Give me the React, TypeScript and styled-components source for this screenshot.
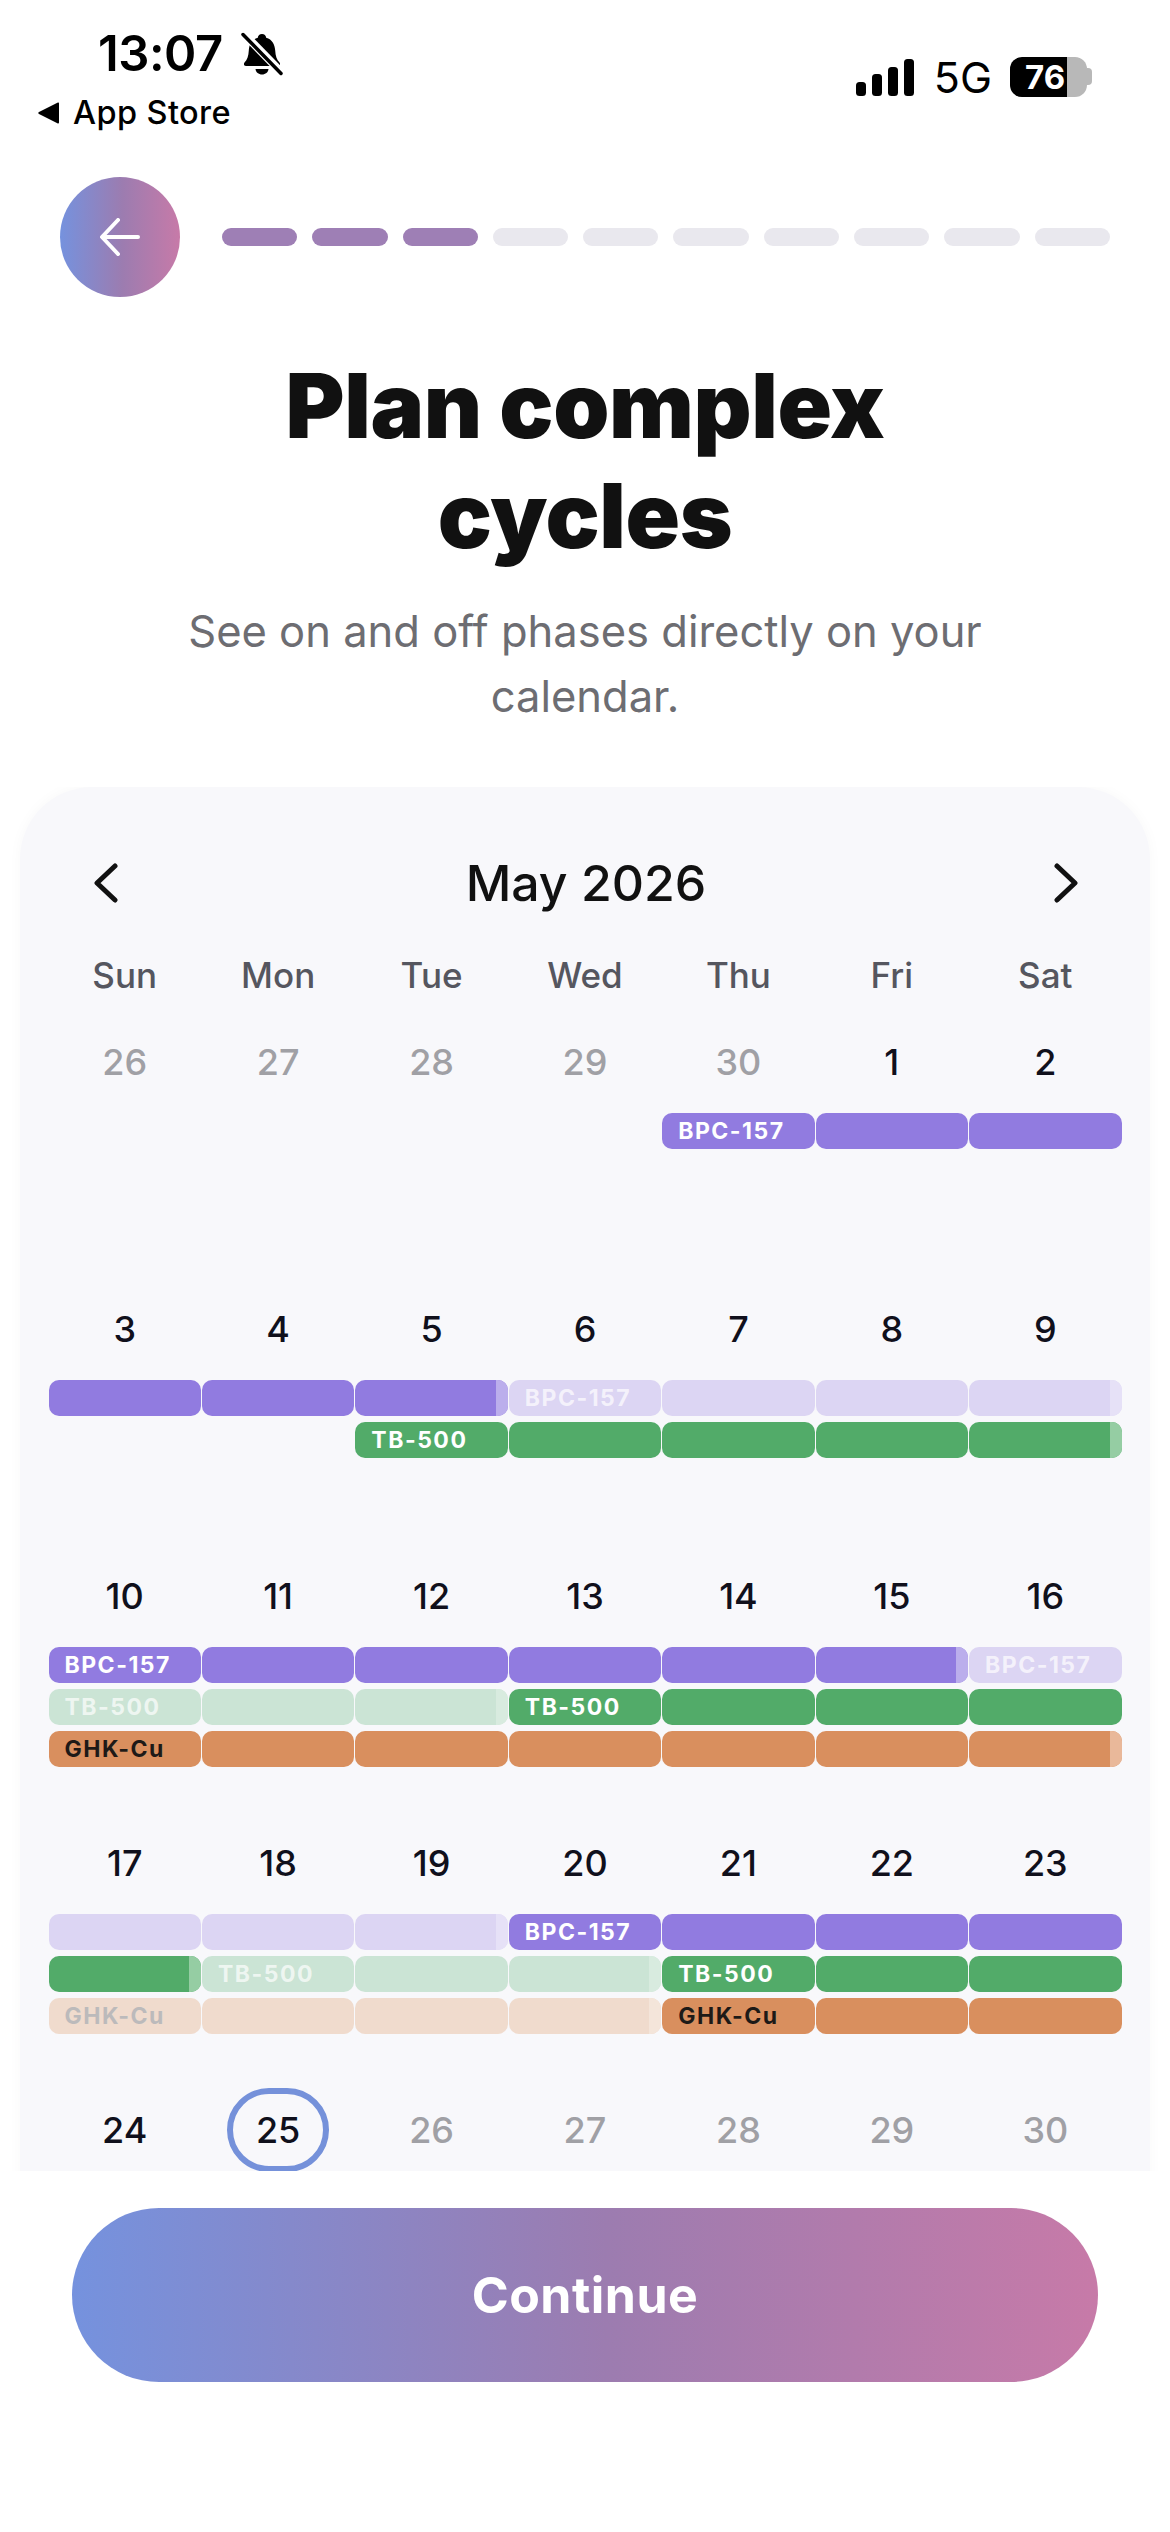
import styled, { createGlobalStyle } from "styled-components"

type Drug = "bpc" | "tb" | "ghk"

type Segment = {
  drug: Drug
  off?: boolean
  label?: string
  tail?: boolean
}

type Day = { n: number; muted?: boolean; today?: boolean }

type Week = {
  days: Day[]
  lanes: (Segment | null)[][]
}

const GlobalStyle = createGlobalStyle`
  html, body {
    margin: 0;
    padding: 0;
    background: #fff;
    font-family: Inter, "Liberation Sans", sans-serif;
  }
  * { box-sizing: border-box; }
`

const brandGradient = "linear-gradient(90deg, #7592de, #9c7cb0 52%, #c77aa8)"

const colors = {
  bpc: { on: "#917be0", off: "#dcd5f3", tailOn: "#bbaeec", tailOff: "#e6e1f7" },
  tb: { on: "#52ab69", off: "#cbe4d5", tailOn: "#95cda3", tailOff: "#d8ebdf" },
  ghk: { on: "#d98f5e", off: "#f0dbcd", tailOn: "#e9b89a", tailOff: "#f4e5da" },
}

const range = (from: number, to: number, muted = false): Day[] =>
  Array.from({ length: to - from + 1 }, (_, i) => ({ n: from + i, muted }))

const run = (drug: Drug, count: number, off = false, label?: string, tail = false): Segment[] =>
  Array.from({ length: count }, (_, i) => ({
    drug,
    off,
    label: i === 0 ? label : undefined,
    tail: tail && i === count - 1,
  }))

const empty = (count: number): null[] => Array.from({ length: count }, () => null)

const weeks: Week[] = [
  {
    days: [...range(26, 30, true), ...range(1, 2)],
    lanes: [[...empty(4), ...run("bpc", 3, false, "BPC-157")]],
  },
  {
    days: range(3, 9),
    lanes: [
      [...run("bpc", 3, false, undefined, true), ...run("bpc", 4, true, "BPC-157", true)],
      [...empty(2), ...run("tb", 5, false, "TB-500", true)],
    ],
  },
  {
    days: range(10, 16),
    lanes: [
      [...run("bpc", 6, false, "BPC-157", true), ...run("bpc", 1, true, "BPC-157")],
      [...run("tb", 3, true, "TB-500", true), ...run("tb", 4, false, "TB-500")],
      run("ghk", 7, false, "GHK-Cu", true),
    ],
  },
  {
    days: range(17, 23),
    lanes: [
      [...run("bpc", 3, true, undefined, true), ...run("bpc", 4, false, "BPC-157")],
      [...run("tb", 1, false, undefined, true), ...run("tb", 3, true, "TB-500", true), ...run("tb", 3, false, "TB-500")],
      [...run("ghk", 4, true, "GHK-Cu", true), ...run("ghk", 3, false, "GHK-Cu")],
    ],
  },
  {
    days: [{ n: 24 }, { n: 25, today: true }, ...range(26, 30, true)],
    lanes: [],
  },
]

const weekdays = ["Sun", "Mon", "Tue", "Wed", "Thu", "Fri", "Sat"]

const App = () => {
  return (
    <Page>
      <GlobalStyle />
      <StatusBar>
        <StatusLeft>
          <TimeRow>
            <Time>13:07</Time>
            <svg width="42" height="44" viewBox="0 0 42 44">
              <path
                d="M21 2c2.4 0 4 1.6 4.2 3.7 6 1.7 8.600 6.700 9 12.800.3 5.500 1.500 9 4.300 12 1.200 1.300.5 3.500-1.500 3.500H5c-2 0-2.700-2.200-1.500-3.500 2.800-3 4-6.500 4.300-12 .4-6.100 3-11.100 9-12.800C17 3.600 18.600 2 21 2z"
                fill="#000"
              />
              <path d="M14.500 37h13c-.3 3.200-3 5.500-6.500 5.500s-6.200-2.300-6.500-5.500z" fill="#000" />
              <path d="M3 2l37 38" stroke="#fff" strokeWidth="8" />
              <path d="M2 2.500l38 39" stroke="#000" strokeWidth="3.500" strokeLinecap="round" />
            </svg>
          </TimeRow>
          <BackToStore>
            <svg width="22" height="22" viewBox="0 0 22 22">
              <path d="M21 1.500v19a1 1 0 0 1-1.600.8L1 12a1.200 1.200 0 0 1 0-2L19.400.7a1 1 0 0 1 1.600.8z" fill="#000" />
            </svg>
            App Store
          </BackToStore>
        </StatusLeft>
        <StatusRight>
          <svg width="58" height="37" viewBox="0 0 58 37">
            <rect x="0" y="23" width="10" height="14" rx="3.500" />
            <rect x="16" y="15" width="10" height="22" rx="3.500" />
            <rect x="32" y="8" width="10" height="29" rx="3.500" />
            <rect x="48" y="0" width="10" height="37" rx="3.500" />
          </svg>
          <Network>5G</Network>
          <Battery>
            <BatteryLevel>76</BatteryLevel>
            <BatteryNub />
          </Battery>
        </StatusRight>
      </StatusBar>

      <NavRow>
        <BackButton>
          <svg width="40" height="38" viewBox="0 0 40 38" fill="none">
            <path
              d="M38 19H3M18 2L2 19l16 17"
              stroke="#fff"
              strokeWidth="4"
              strokeLinecap="round"
              strokeLinejoin="round"
            />
          </svg>
        </BackButton>
        <Progress>
          {Array.from({ length: 10 }, (_, i) => (
            <ProgressStep key={i} $done={i < 3} />
          ))}
        </Progress>
      </NavRow>

      <Title>
        Plan complex
        <br />
        cycles
      </Title>
      <Subtitle>
        See on and off phases directly on your
        <br />
        calendar.
      </Subtitle>

      <CardClip>
        <Card>
          <MonthHeader>
            <svg width="24" height="40" viewBox="0 0 24 40" fill="none">
              <path d="M21 3L3 20l18 17" stroke="#111" strokeWidth="5" strokeLinecap="round" strokeLinejoin="round" />
            </svg>
            <MonthName>May 2026</MonthName>
            <svg width="24" height="40" viewBox="0 0 24 40" fill="none">
              <path d="M3 3l18 17L3 37" stroke="#111" strokeWidth="5" strokeLinecap="round" strokeLinejoin="round" />
            </svg>
          </MonthHeader>
          <WeekdayRow>
            {weekdays.map((d) => (
              <Weekday key={d}>{d}</Weekday>
            ))}
          </WeekdayRow>
          {weeks.map((week, w) => (
            <WeekBlock key={w}>
              <DayRow>
                {week.days.map((day, i) => (
                  <DayCell key={i}>
                    <DayNumber $muted={day.muted} $today={day.today}>
                      {day.n}
                    </DayNumber>
                  </DayCell>
                ))}
              </DayRow>
              <Lanes>
                {week.lanes.map((lane, l) => (
                  <Lane key={l}>
                    {lane.map((seg, i) =>
                      seg ? (
                        <Bar key={i} $drug={seg.drug} $off={seg.off}>
                          {seg.label && (
                            <BarLabel $drug={seg.drug} $off={seg.off}>
                              {seg.label}
                            </BarLabel>
                          )}
                          {seg.tail && <BarTail $drug={seg.drug} $off={seg.off} />}
                        </Bar>
                      ) : (
                        <span key={i} />
                      )
                    )}
                  </Lane>
                ))}
              </Lanes>
            </WeekBlock>
          ))}
        </Card>
      </CardClip>

      <Footer>
        <ContinueButton>Continue</ContinueButton>
      </Footer>
    </Page>
  )
}

const Page = styled.div`
  width: 1170px;
  height: 2532px;
  background: #fff;
  display: flex;
  flex-direction: column;
  overflow: hidden;
`

const StatusBar = styled.div`
  height: 177px;
  padding: 27px 83px 0 38px;
  display: flex;
  justify-content: space-between;
  align-items: flex-start;
  color: #000;
  flex-shrink: 0;
`

const StatusLeft = styled.div`
  display: flex;
  flex-direction: column;
`

const TimeRow = styled.div`
  display: flex;
  align-items: center;
  gap: 18px;
  margin-left: 60px;
  height: 54px;
`

const Time = styled.span`
  font-size: 49px;
  font-weight: 600;
  line-height: 54px;
  letter-spacing: -0.5px;
`

const BackToStore = styled.div`
  display: flex;
  align-items: center;
  gap: 13px;
  margin-top: 12px;
  font-size: 32.5px;
  font-weight: 500;
  line-height: 40px;
  letter-spacing: 0.4px;
`

const StatusRight = styled.div`
  display: flex;
  align-items: center;
  gap: 20px;
  margin-top: 30px;
  height: 40px;
`

const Network = styled.span`
  font-size: 43px;
  font-weight: 400;
  line-height: 40px;
`

const Battery = styled.div`
  position: relative;
  margin-left: -2px;
`

const BatteryLevel = styled.div`
  width: 77px;
  height: 40px;
  border-radius: 12px;
  background: linear-gradient(90deg, #000 0, #000 57px, #b8b8b8 57px);
  color: #fff;
  font-size: 33px;
  font-weight: 700;
  line-height: 40px;
  padding-left: 15px;
  white-space: nowrap;
`

const BatteryNub = styled.div`
  position: absolute;
  right: -5px;
  top: 11px;
  width: 5px;
  height: 17px;
  border-radius: 0 4px 4px 0;
  background: #b8b8b8;
`

const NavRow = styled.div`
  display: flex;
  align-items: center;
  gap: 42px;
  padding: 0 60px;
  flex-shrink: 0;
`

const BackButton = styled.div`
  width: 120px;
  height: 120px;
  border-radius: 50%;
  flex-shrink: 0;
  display: flex;
  align-items: center;
  justify-content: center;
  background: ${brandGradient};
`

const Progress = styled.div`
  flex: 1;
  display: flex;
  gap: 15px;
`

const ProgressStep = styled.div<{ $done: boolean }>`
  flex: 1;
  height: 18px;
  border-radius: 9px;
  background: ${(p) => (p.$done ? "#9e7fb5" : "#e9e8ee")};
`

const Title = styled.h1`
  margin: 54px 0 0;
  text-align: center;
  font-size: 90px;
  font-weight: 900;
  line-height: 110px;
  letter-spacing: -0.4px;
  color: #111;
`

const Subtitle = styled.p`
  margin: 28px 0 0;
  text-align: center;
  font-size: 43.5px;
  font-weight: 400;
  line-height: 65px;
  color: #6d6d72;
`

const CardClip = styled.div`
  flex: 1;
  min-height: 0;
  margin-top: 58px;
  padding: 0 20px;
  overflow: hidden;
`

const Card = styled.div`
  background: #f8f8fb;
  border-radius: 72px 72px 0 0;
  padding: 66px 28px 0;
  box-shadow: 0 0 14px rgba(30, 30, 60, 0.03);
`

const MonthHeader = styled.div`
  display: flex;
  align-items: center;
  justify-content: space-between;
  height: 60px;
  padding: 0 44px 0 46px;
`

const MonthName = styled.div`
  font-size: 50px;
  font-weight: 500;
  color: #111;
`

const WeekdayRow = styled.div`
  display: grid;
  grid-template-columns: repeat(7, 1fr);
  margin: 37px 0 20px;
`

const Weekday = styled.div`
  text-align: center;
  font-size: 35px;
  line-height: 50px;
  font-weight: 450;
  color: #55565f;
`

const WeekBlock = styled.div`
  height: 267px;
`

const DayRow = styled.div`
  display: grid;
  grid-template-columns: repeat(7, 1fr);
  height: 64px;
`

const DayCell = styled.div`
  display: flex;
  align-items: center;
  justify-content: center;
`

const DayNumber = styled.div<{ $muted?: boolean; $today?: boolean }>`
  width: 102px;
  height: 84px;
  flex-shrink: 0;
  display: flex;
  align-items: center;
  justify-content: center;
  border-radius: 42px;
  font-size: 36px;
  font-weight: 450;
  color: ${(p) => (p.$muted ? "#a0a0a5" : "#10101c")};
  border: ${(p) => (p.$today ? "6px solid #7591da" : "none")};
`

const Lanes = styled.div`
  display: flex;
  flex-direction: column;
  gap: 6px;
  margin-top: 29px;
`

const Lane = styled.div`
  display: grid;
  grid-template-columns: repeat(7, 1fr);
  height: 36px;
`

const Bar = styled.div<{ $drug: Drug; $off?: boolean }>`
  position: relative;
  margin: 0 0.5px;
  height: 36px;
  border-radius: 10px;
  overflow: hidden;
  display: flex;
  align-items: center;
  padding-left: 16px;
  background: ${(p) => (p.$off ? colors[p.$drug].off : colors[p.$drug].on)};
`

const BarLabel = styled.span<{ $drug: Drug; $off?: boolean }>`
  font-size: 23px;
  font-weight: 700;
  letter-spacing: 1.5px;
  white-space: nowrap;
  color: ${(p) =>
    p.$drug === "ghk" ? (p.$off ? "#bcbabb" : "#1e1a17") : p.$off ? "rgba(255,255,255,0.7)" : "#fff"};
`

const BarTail = styled.div<{ $drug: Drug; $off?: boolean }>`
  position: absolute;
  right: 0;
  top: 0;
  bottom: 0;
  width: 12px;
  background: ${(p) => (p.$off ? colors[p.$drug].tailOff : colors[p.$drug].tailOn)};
`

const Footer = styled.div`
  height: 361px;
  flex-shrink: 0;
  background: #fff;
  padding: 37px 72px 0;
`

const ContinueButton = styled.div`
  height: 174px;
  border-radius: 87px;
  display: flex;
  align-items: center;
  justify-content: center;
  background: ${brandGradient};
  color: #fff;
  font-size: 50px;
  font-weight: 700;
  letter-spacing: 0.5px;
`

export default App
